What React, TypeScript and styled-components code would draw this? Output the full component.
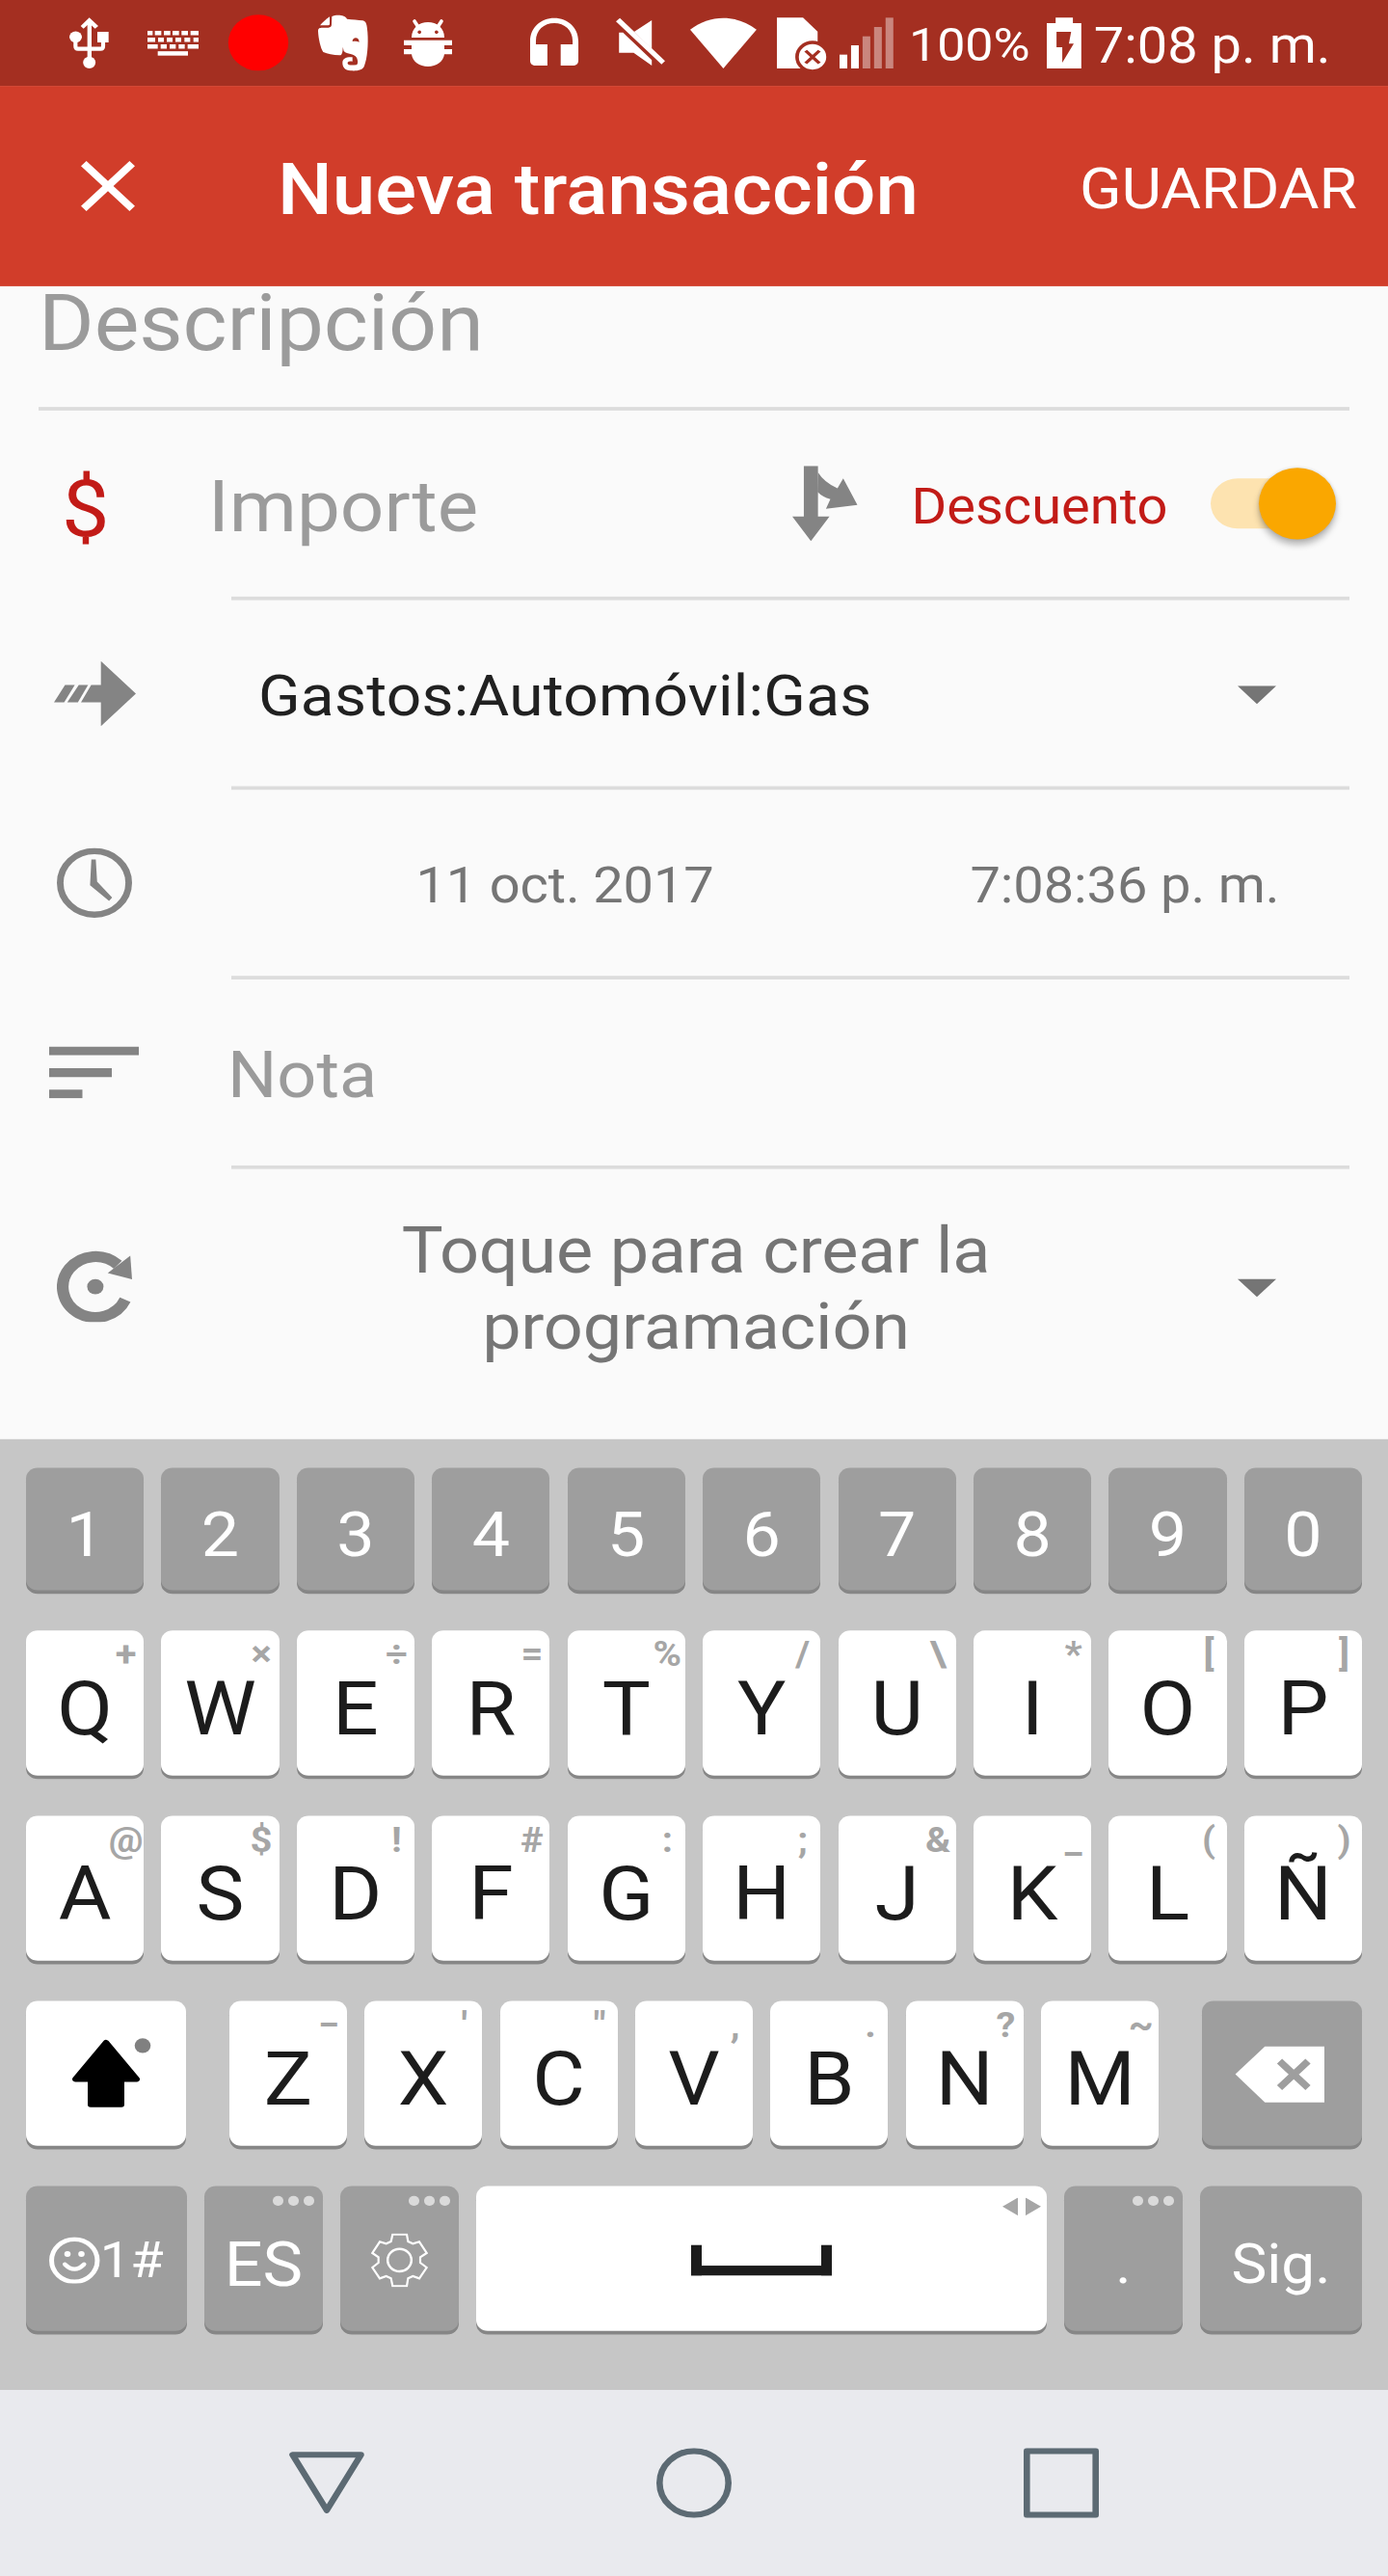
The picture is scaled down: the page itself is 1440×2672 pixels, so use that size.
import React from "react";
import styled, { createGlobalStyle } from "styled-components";

const GlobalStyle = createGlobalStyle`
  * { box-sizing: border-box; }
  html, body { margin: 0; padding: 0; }
  body { font-family: Roboto, "Noto Sans", "Liberation Sans", sans-serif; }
  svg { display: block; flex: none; }
`;

const colors = {
  status: "#a42f21",
  primary: "#d13d2a",
  surface: "#fafafa",
  divider: "#dcdcdc",
  hint: "#9b9b9b",
  icon: "#848484",
  body: "#757575",
  text: "#212121",
  debit: "#c21b17",
  accent: "#faa700",
  keyboard: "#c6c6c6",
  keyDark: "#9e9e9e",
  keyHint: "#a6a6a6",
  nav: "#e9eaee",
  navIcon: "#5c6a73",
};

/* The panel is 1440x2880 and is fitted to a 2672px tall window. */
const Window = styled.div`
  width: 1440px;
  height: 2672px;
  overflow: hidden;
`;

const Screen = styled.div`
  width: 1440px;
  height: 2880px;
  display: flex;
  flex-direction: column;
  transform: scaleY(0.927778);
  transform-origin: 0 0;
  background: ${colors.surface};
`;

const Text = styled.span<{ $size: number; $color?: string; $weight?: number }>`
  flex: none;
  padding-top: 0.12em;
  font-size: ${(p) => p.$size}px;
  font-weight: ${(p) => p.$weight ?? 400};
  color: ${(p) => p.$color ?? "#fff"};
  line-height: 1.172;
  white-space: nowrap;
`;

/* ---------- Status bar ---------- */

const StatusBar = styled.div`
  height: 96px;
  flex: none;
  display: flex;
  align-items: center;
  background: ${colors.status};
  color: #fff;
`;

const StatusSvg = styled.svg<{ $gap: number }>`
  height: 96px;
  margin-left: ${(p) => p.$gap}px;
  overflow: visible;
`;

const Percent = styled(Text)`
  width: 143px;
  margin-left: 16px;
`;

const ClockText = styled(Text)`
  margin-left: 13px;
`;

interface StatusIconProps {
  x: number;
  w: number;
  unit: number;
  gap: number;
  children: React.ReactNode;
}

const StatusIcon = ({ x, w, unit, gap, children }: StatusIconProps) => (
  <StatusSvg
    $gap={gap}
    width={w / unit}
    viewBox={`${x} 0 ${w} 267.2`}
    preserveAspectRatio="none"
    fill="#fff"
  >
    {children}
  </StatusSvg>
);

const keyboardDots: [number, number, number][] = [
  [310, 326, 96], [333, 353, 96], [361, 381, 96], [388, 408, 96], [416, 436, 96], [444, 469, 96],
  [310, 334, 117], [343, 361, 117], [370, 388, 117], [397, 415, 117], [425, 443, 117], [453, 469, 117],
  [310, 342, 138], [351, 370, 138], [379, 398, 138], [407, 426, 138], [435, 469, 138],
  [342, 436, 159.5],
];

const signalBars: [number, number, number][] = [
  [329, 170, 1], [355, 141, 1], [381, 113, 0.42], [407, 84, 0.42], [433, 55, 0.42],
];

const Status = () => (
  <StatusBar>
    <StatusIcon x={66} w={122} unit={3} gap={72}>
      <rect x="122" y="70" width="13" height="115" />
      <path d="M128 55l28 26-10 8-18-16-18 16-9-8z" />
      <ellipse cx="85.500" cy="115" rx="19.500" ry="17.500" />
      <rect x="153" y="99" width="35" height="33" />
      <path d="M85 125v19q0 8 8 8h70q8 0 8-8v-19" fill="none" stroke="#fff" strokeWidth="12.500" />
      <ellipse cx="128" cy="194.500" rx="19.500" ry="18.500" />
    </StatusIcon>
    <StatusIcon x={310} w={159} unit={3} gap={40.6}>
      {keyboardDots.map(([a, b, y]) => (
        <rect key={`${a}-${y}`} x={a} y={y} width={b - a} height="13.500" />
      ))}
    </StatusIcon>
    <StatusIcon x={561} w={186} unit={3} gap={30.7}>
      <ellipse cx="654" cy="133" rx="93.500" ry="87" fill="#f00" />
    </StatusIcon>
    <StatusIcon x={841} w={155} unit={3} gap={31.3}>
      <path d="M847 79C856 69 866 59 877 52V74Q877 79 872 79Z" />
      <path d="M884 51C898 44 926 46 931 59C948 62 965 61 980 64C992 67 993 78 995 100C998 140 994 182 985 205C980 220 962 221 942 220C924 219 917 209 917 196C917 182 928 177 948 178V191C936 189 932 192 933 198C935 204 946 203 961 202C966 198 965 187 961 179C952 166 932 170 921 159L918 146C918 160 916 173 908 172C888 171 870 167 857 162C849 152 842 120 841 97C841 88 845 86 855 86H873Q883 86 883 76Z" />
      <path d="M948 129C948 114 969 114 969 131C962 127 955 128 948 129Z" fill={colors.status} />
    </StatusIcon>
    <StatusIcon x={1107} w={150} unit={3} gap={37}>
      <path d="M1131 117C1131 86 1155 69 1182 69S1233 86 1233 117Z" />
      <path d="M1140 66l13 20M1224 66l-13 20" stroke="#fff" strokeWidth="11" strokeLinecap="round" />
      <circle cx="1155.500" cy="100" r="5.500" fill={colors.status} />
      <circle cx="1208.500" cy="100" r="5.500" fill={colors.status} />
      <path d="M1107 125H1257V141H1233V153H1257V169H1233C1230 192 1208 207 1182 207S1134 192 1131 169H1107V153H1131V141H1107Z" />
    </StatusIcon>
    <StatusIcon x={1198} w={109} unit={2.1778} gap={81.1}>
      <path d="M1198 188V128C1198 86 1222 56 1252.500 56S1307 86 1307 128V188C1307 198 1302 204 1294 204H1267V138H1294V128C1294 94 1276 72 1252.500 72S1211 94 1211 128V138H1237V204H1211C1203 204 1198 198 1198 188Z" />
    </StatusIcon>
    <StatusIcon x={1393} w={111} unit={2.1778} gap={39.4}>
      <path d="M1402 56L1504 190 1496 200 1393 67Z" />
      <path d="M1434 99L1474 63V152Z" />
      <path d="M1400 101H1409L1474 187V204L1433 164H1400Z" />
    </StatusIcon>
    <StatusIcon x={-8} w={150} unit={2.1778} gap={25.7}>
      <path d="M67 213L-8 92C15 68 40 56 67 56S119 68 142 92Z" />
    </StatusIcon>
    <StatusIcon x={187} w={111} unit={2.1778} gap={20.7}>
      <path d="M187 55H246L279 98V213H187Z" />
      <ellipse cx="267.500" cy="177" rx="39" ry="50" fill={colors.status} />
      <ellipse cx="267.500" cy="177" rx="31" ry="39.500" />
      <path d="M252 158l31 39M283 158l-31 39" stroke={colors.status} strokeWidth="8" />
    </StatusIcon>
    <StatusIcon x={329} w={122} unit={2.1778} gap={14.3}>
      {signalBars.map(([x, y, o]) => (
        <rect key={x} x={x} y={y} width="17.500" height={213 - y} fillOpacity={o} />
      ))}
    </StatusIcon>
    <Percent $size={52}>100%</Percent>
    <StatusIcon x={797} w={78} unit={2.1778} gap={0}>
      <path d="M797 72H817V55H856V72H875V213H797Z" />
      <path d="M819 99H852L847 136H858L832 195V147H819Z" fill={colors.status} />
    </StatusIcon>
    <ClockText $size={56}>7:08 p. m.</ClockText>
  </StatusBar>
);

/* ---------- App bar ---------- */

const AppBar = styled.header`
  height: 224px;
  flex: none;
  display: flex;
  align-items: center;
  padding: 0 32px 0 64px;
  background: ${colors.primary};
`;

const Title = styled(Text)`
  flex: 1;
  margin-left: 128px;
`;

/* ---------- Form ---------- */

const Form = styled.main`
  height: 1289px;
  flex: none;
  display: flex;
  flex-direction: column;
`;

const Divider = styled.div<{ $inset: number }>`
  height: 4px;
  flex: none;
  margin: 0 40px 0 ${(p) => p.$inset}px;
  background: ${colors.divider};
`;

const DescriptionRow = styled.div`
  height: 135px;
  padding-left: 40px;
  line-height: 81px;
  font-size: 88px;
  letter-spacing: -0.1px;
  color: ${colors.hint};
  white-space: nowrap;
`;

const Row = styled.div<{ $height?: number }>`
  height: ${(p) => p.$height ?? 208}px;
  display: flex;
  align-items: center;
`;

const IconCell = styled.div<{ $inset: number; $width?: number }>`
  width: ${(p) => p.$width ?? 240}px;
  flex: none;
  padding-left: ${(p) => p.$inset}px;
`;

const Amount = styled(Text)`
  width: 606px;
`;

const TypeLabel = styled(Text)`
  width: 366px;
  padding-left: 56px;
`;

const Switch = styled.div`
  display: flex;
  align-items: center;
`;

const Track = styled.div`
  width: 116px;
  height: 56px;
  border-radius: 28px;
  background: #fde3b0;
`;

const Thumb = styled.div`
  width: 80px;
  height: 80px;
  margin-left: -66px;
  border-radius: 50%;
  background: ${colors.accent};
  box-shadow: 0 6px 8px rgba(0, 0, 0, 0.28), 0 0 4px rgba(0, 0, 0, 0.12);
`;

const Account = styled(Text)`
  width: 964px;
  padding-left: 28px;
  letter-spacing: 0.25px;
`;

const DateText = styled(Text)`
  width: 692px;
  text-align: center;
  letter-spacing: -0.15px;
`;

const TimeText = styled(Text)`
  width: 470px;
  text-align: center;
  letter-spacing: -0.1px;
`;

const Note = styled(Text)`
  margin-left: -4px;
`;

const Recurrence = styled(Text)`
  width: 964px;
  padding-top: 0.08em;
  text-align: center;
  line-height: 85px;
  letter-spacing: -0.2px;
`;

const Caret = styled.div`
  margin: 3px 0 0 80px;
  border: 20px solid transparent;
  border-top-color: ${colors.body};
  border-bottom-width: 0;
`;

const TransactionForm = () => (
  <Form>
    <DescriptionRow>Descripción</DescriptionRow>
    <Divider $inset={40} />
    <Row>
      <IconCell $inset={64} $width={216}>
        <Text as="div" $size={88} $color={colors.debit}>$</Text>
      </IconCell>
      <Amount $size={80} $color={colors.hint}>Importe</Amount>
      <svg width="67.500" height="84" viewBox="223 561 147 226" preserveAspectRatio="none" fill={colors.icon}>
        <path d="M249 561H281V713H307L265 787 223 713H249Z" />
        <path d="M281 580Q295 610 325 628L338 598 370 678 299 690 309 661Q291 654 280 639Z" />
      </svg>
      <TypeLabel $size={56} $color={colors.debit}>Descuento</TypeLabel>
      <Switch>
        <Track />
        <Thumb />
      </Switch>
    </Row>
    <Divider $inset={240} />
    <Row>
      <IconCell $inset={55.6}>
        <svg width="85" height="73" viewBox="121 1148 185 196" preserveAspectRatio="none" fill={colors.icon}>
          <path d="M227 1148L306 1246 227 1344V1272H182L205 1220H227Z" />
          <path d="M146 1220H168L144 1272H121ZM177 1220H198L175 1272H151Z" />
        </svg>
      </IconCell>
      <Account $size={64} $color={colors.text}>Gastos:Automóvil:Gas</Account>
      <Caret />
    </Row>
    <Divider $inset={240} />
    <Row>
      <IconCell $inset={58.8}>
        <svg width="78" height="78" viewBox="128 116 170 170" fill={colors.icon}>
          <circle cx="213" cy="201" r="77.500" fill="none" stroke={colors.icon} strokeWidth="15" />
          <path d="M206 144H216L219 198 253 237 246 245 203 207Z" />
        </svg>
      </IconCell>
      <DateText $size={56} $color={colors.body}>11 oct. 2017</DateText>
      <TimeText $size={56} $color={colors.body}>7:08:36 p. m.</TimeText>
    </Row>
    <Divider $inset={240} />
    <Row>
      <IconCell $inset={51.4}>
        <svg width="93" height="58" viewBox="0 0 93 58" fill={colors.icon}>
          <path d="M0 0H93V9.700H0ZM0 24.200H65V34.200H0ZM0 48.300H34.500V58H0Z" />
        </svg>
      </IconCell>
      <Note $size={72} $color={colors.hint}>Nota</Note>
    </Row>
    <Divider $inset={240} />
    <Row $height={262}>
      <IconCell $inset={58.8}>
        <svg width="78" height="80.500" viewBox="128 1092 170 175" preserveAspectRatio="none" fill={colors.icon}>
          <circle cx="215" cy="1180" r="18.500" />
          <path d="M282.500 1212A74 74 0 1 1 266 1127" fill="none" stroke={colors.icon} strokeWidth="26.500" />
          <path d="M294 1105L298 1162 243 1147Z" />
        </svg>
      </IconCell>
      <Recurrence as="div" $size={72} $color={colors.body}>
        Toque para crear la
        <br />
        programación
      </Recurrence>
      <Caret />
    </Row>
  </Form>
);

/* ---------- Keyboard ---------- */

const Keyboard = styled.section`
  height: 1063px;
  flex: none;
  display: flex;
  flex-direction: column;
  gap: 45px;
  padding: 32px 27px 0;
  background: ${colors.keyboard};
`;

const TenKeys = styled.div<{ $height: number }>`
  height: ${(p) => p.$height}px;
  display: grid;
  grid-template-columns: repeat(10, 1fr);
  column-gap: 18.300px;
`;

const ShiftRow = styled.div`
  height: 162px;
  display: grid;
  grid-template-columns: 166px 964.500px 166px;
  justify-content: space-between;
`;

const Letters = styled.div`
  display: grid;
  grid-template-columns: repeat(7, 1fr);
  column-gap: 18.300px;
`;

const BottomRow = styled.div`
  height: 162px;
  display: grid;
  grid-template-columns: 167px 123px 123px 1fr 123px 168px;
  column-gap: 18px;
`;

const Key = styled.div<{ $dark?: boolean; $size?: number; $drop?: number }>`
  position: relative;
  display: flex;
  align-items: center;
  justify-content: center;
  padding-top: ${(p) => p.$drop ?? 14}px;
  border-radius: 12px;
  background: ${(p) => (p.$dark ? colors.keyDark : "#fff")};
  box-shadow: 0 4px 0 #868686;
  color: ${(p) => (p.$dark ? "#fff" : "#1c1c1c")};
  font-size: ${(p) => p.$size ?? 84}px;
  line-height: 1;
  white-space: nowrap;
`;

const Hint = styled.span`
  position: absolute;
  top: 0;
  right: 0;
  width: 37px;
  display: flex;
  justify-content: center;
  font-size: 40px;
  font-weight: 700;
  line-height: 53px;
  color: ${colors.keyHint};
`;

const Corner = styled.span<{ $gap: number; $top: number; $right: number }>`
  position: absolute;
  top: ${(p) => p.$top}px;
  right: ${(p) => p.$right}px;
  display: flex;
  gap: ${(p) => p.$gap}px;
`;

const Dot = styled.i`
  width: 10.600px;
  height: 10.600px;
  border-radius: 50%;
  background: #dadada;
`;

const SpaceMark = styled.div`
  width: 146px;
  height: 34px;
  border: 11px solid #1c1c1c;
  border-top: 0;
`;

const More = () => (
  <Corner $gap={5.4} $top={11} $right={9}>
    <Dot />
    <Dot />
    <Dot />
  </Corner>
);

const LetterKey = ({ pair }: { pair: string }) => (
  <Key>
    {pair[0]}
    <Hint>{pair[1]}</Hint>
  </Key>
);

const topRow = ["Q+", "W×", "E÷", "R=", "T%", "Y/", "U\\", "I*", "O[", "P]"];
const homeRow = ["A@", "S$", "D!", "F#", "G:", "H;", "J&", "K_", "L(", "Ñ)"];
const lowRow = ["Z−", "X'", 'C"', "V,", "B.", "N?", "M~"];

const SoftKeyboard = () => (
  <Keyboard>
    <TenKeys $height={137}>
      {"1234567890".split("").map((d) => (
        <Key key={d} $dark $size={70} $drop={12}>{d}</Key>
      ))}
    </TenKeys>
    <TenKeys $height={162}>
      {topRow.map((p) => <LetterKey key={p} pair={p} />)}
    </TenKeys>
    <TenKeys $height={162}>
      {homeRow.map((p) => <LetterKey key={p} pair={p} />)}
    </TenKeys>
    <ShiftRow>
      <Key $drop={0}>
        <svg width="166" height="162" viewBox="0 0 166 162">
          <path
            d="M83 46.500L115 87.500H99V116H67V87.500H51Z"
            fill="#000"
            stroke="#000"
            strokeWidth="6"
            strokeLinejoin="round"
          />
          <circle cx="121" cy="50" r="8.300" fill="#808080" />
        </svg>
      </Key>
      <Letters>
        {lowRow.map((p) => <LetterKey key={p} pair={p} />)}
      </Letters>
      <Key $dark $drop={0}>
        <svg width="166" height="162" viewBox="0 0 166 162">
          <path d="M34.600 82L65.300 51H127V113.500H65.300Z" fill="#fff" />
          <path d="M80.500 67.500L110 97M110 67.500L80.500 97" stroke={colors.keyDark} strokeWidth="7.500" />
        </svg>
      </Key>
    </ShiftRow>
    <BottomRow>
      <Key $dark $size={56} $drop={4}>
        <svg width="52.500" height="52.500" viewBox="0 0 52.500 52.500" fill="none" stroke="#fff">
          <circle cx="26.250" cy="26.250" r="23.700" strokeWidth="5" />
          <path d="M16.300 30.500Q26.250 41 36.200 30.500" strokeWidth="4.600" strokeLinecap="round" />
          <circle cx="19" cy="19" r="3.300" fill="#fff" stroke="none" />
          <circle cx="33.500" cy="19" r="3.300" fill="#fff" stroke="none" />
        </svg>
        1#
      </Key>
      <Key $dark $size={70}>
        ES
        <More />
      </Key>
      <Key $dark $drop={4}>
        <svg width="59" height="60" viewBox="1095 187 177 167" preserveAspectRatio="none" fill="none" stroke="#fff" strokeWidth="6.500">
          <path d="M1162 190H1206L1210 212 1225 219 1245 213 1268 248 1248 261V278L1268 293 1245 327 1225 320 1210 327 1206 351H1162L1157 327 1142 320 1122 327 1099 293 1118 278V261L1099 248 1122 213 1142 219 1157 212Z" />
          <ellipse cx="1183.500" cy="270" rx="37" ry="35" strokeWidth="7.500" />
        </svg>
        <More />
      </Key>
      <Key $drop={4}>
        <SpaceMark />
        <Corner $gap={0} $top={13} $right={6}>
          <svg width="40" height="20" viewBox="0 0 40 20" fill={colors.keyHint}>
            <path d="M16 0V20L0 10ZM24 0L40 10 24 20Z" />
          </svg>
        </Corner>
      </Key>
      <Key $dark $size={62} $drop={12}>
        .
        <More />
      </Key>
      <Key $dark $size={62} $drop={12}>Sig.</Key>
    </BottomRow>
  </Keyboard>
);

/* ---------- Navigation bar ---------- */

const NavBar = styled.nav`
  height: 208px;
  flex: none;
  display: flex;
  align-items: center;
  justify-content: center;
  gap: 303px;
  background: ${colors.nav};
`;

const Navigation = () => (
  <NavBar>
    {[
      <path key="back" d="M3.500 7.500H74.500L39 69.500Z" />,
      <circle key="home" cx="39" cy="39" r="35.700" />,
      <rect key="recent" x="3.300" y="3.300" width="71.400" height="71.400" />,
    ].map((shape, i) => (
      <svg
        key={i}
        width="78"
        height="78"
        viewBox="0 0 78 78"
        fill="none"
        stroke={colors.navIcon}
        strokeWidth="6.600"
        strokeLinejoin="round"
      >
        {shape}
      </svg>
    ))}
  </NavBar>
);

export default function App() {
  return (
    <Window>
      <GlobalStyle />
      <Screen>
        <Status />
        <AppBar>
          <svg width="96" height="96" viewBox="0 0 24 24" fill="#fff">
            <path d="M19 6.410L17.590 5 12 10.590 6.410 5 5 6.410 10.590 12 5 17.590 6.410 19 12 13.410 17.590 19 19 17.590 13.410 12z" />
          </svg>
          <Title $size={80} $weight={500}>Nueva transacción</Title>
          <Text $size={64}>GUARDAR</Text>
        </AppBar>
        <TransactionForm />
        <SoftKeyboard />
        <Navigation />
      </Screen>
    </Window>
  );
}
